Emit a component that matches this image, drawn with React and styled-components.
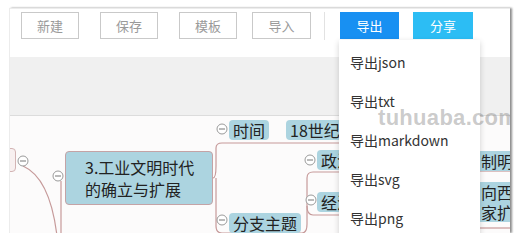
import React from 'react';
import styled, { createGlobalStyle } from 'styled-components';

const Global = createGlobalStyle`
  html, body {
    margin: 0;
    padding: 0;
    background: #ffffff;
    font-family: "Noto Sans CJK SC", "Noto Sans", sans-serif;
  }
`;

const Frame = styled.div`
  position: relative;
  margin: 8px 0 0 9px;
  width: 501px;
  height: 225px;
  display: flex;
  flex-direction: column;
  overflow: hidden;
  border-top: 1px solid #ececec;
  border-left: 1px solid #ececec;
  box-shadow: 2px 0 2px rgba(0, 0, 0, 0.45);
  box-sizing: border-box;
`;

const Toolbar = styled.div`
  height: 48px;
  flex: none;
  background: #fff;
  display: flex;
  align-items: flex-start;
  padding: 3px 0 0 11px;
  box-sizing: border-box;
`;

const Button = styled.div`
  width: ${p => p.w || 58}px;
  height: 27px;
  margin-right: ${p => p.mr || 0}px;
  box-sizing: border-box;
  border: 1px solid ${p => (p.primary ? p.primary : '#c9c9c9')};
  background: ${p => (p.primary ? p.primary : '#fff')};
  color: ${p => (p.primary ? '#fff' : '#9a9a9a')};
  font-size: 13px;
  line-height: 25px;
  text-align: center;
`;

const Separator = styled.div`
  width: 1px;
  height: 28px;
  background: #e2e2e2;
  margin-right: 15px;
`;

const GrayBand = styled.div`
  height: 58px;
  flex: none;
  background: #f0f0f0;
  border-bottom: 1px solid #dcdcdc;
`;

const Canvas = styled.div`
  position: relative;
  flex: 1;
  background: #fcfbfb;
`;

const Lines = styled.svg`
  position: absolute;
  left: 0;
  top: 0;
  overflow: visible;
`;

const Node = styled.div`
  position: absolute;
  left: ${p => p.x}px;
  top: ${p => p.y}px;
  padding: ${p => (p.main ? '4px 10px 4px 19px' : '0 4px')};
  width: ${p => (p.w ? `${p.w}px` : 'auto')};
  box-sizing: border-box;
  background: ${p => (p.root ? '#f8f0f0' : '#acd4e0')};
  border: ${p => (p.main ? '1px solid #c4a3a6' : p.root ? '1px solid #d3b4b4' : 'none')};
  border-radius: 4px;
  color: #222;
  font-size: 16px;
  line-height: ${p => (p.main ? '22px' : '20px')};
  white-space: nowrap;
`;

const Menu = styled.div`
  position: absolute;
  left: 329px;
  top: 31px;
  width: 141px;
  height: 210px;
  background: #fff;
  box-shadow: 0 2px 6px rgba(0, 0, 0, 0.18);
  padding-top: 3px;
  box-sizing: border-box;
`;

const MenuItem = styled.div`
  height: 39px;
  line-height: 39px;
  padding-left: 11px;
  font-size: 14px;
  color: #333;
`;

const Watermark = styled.div`
  position: absolute;
  left: 368px;
  top: 96px;
  font-family: "Liberation Sans", Arial, sans-serif;
  font-weight: bold;
  font-size: 22px;
  letter-spacing: 0.3px;
  color: rgba(130, 130, 130, 0.42);
  pointer-events: none;
`;

const Toggle = ({ cx, cy }) => (
  <g>
    <circle cx={cx} cy={cy} r="5" fill="#fff" stroke="#9a9a9a" strokeWidth="1" />
    <line x1={cx - 3} y1={cy} x2={cx + 3} y2={cy} stroke="#777" strokeWidth="1" />
  </g>
);

const menu = ['导出json', '导出txt', '导出markdown', '导出svg', '导出png'];

export default function App() {
  return (
    <>
      <Global />
      <Frame>
        <Toolbar>
          <Button mr={21}>新建</Button>
          <Button mr={21}>保存</Button>
          <Button mr={15}>模板</Button>
          <Button w={59} mr={13}>导入</Button>
          <Separator />
          <Button w={59} mr={14} primary="#1890f2">导出</Button>
          <Button w={60} primary="#2cbdf4">分享</Button>
        </Toolbar>
        <GrayBand />
        <Canvas>
          <Lines width="500" height="120">
            <g fill="none" stroke="#c69a9a" strokeWidth="1.2">
              <path d="M13 50 Q40 62 47 120" />
              <path d="M51 65 L51 120" />
              <path d="M203 62 Q206 62 206 50 L206 32 Q206 27 212 27 L340 27" />
              <path d="M206 62 L206 110 Q206 117 212 117 L292 117" />
              <path d="M292 117 Q297 117 297 108 L297 62 Q297 56 303 56 L340 56" />
              <path d="M297 90 Q297 99 303 99 L340 99" />
              <path d="M470 55 L500 55" />
              <path d="M470 112 L500 112" />
            </g>
            <Toggle cx={13} cy={45} />
            <Toggle cx={48} cy={60} />
            <Toggle cx={212} cy={13} />
            <Toggle cx={212} cy={104} />
            <Toggle cx={300} cy={44} />
            <Toggle cx={301} cy={84} />
          </Lines>
          <Node root x={-20} y={32} w={26} style={{ height: 24 }} />
          <Node main x={55} y={35} w={148}>
            3.工业文明时代
            <br />
            的确立与扩展
          </Node>
          <Node x={219} y={4}>时间</Node>
          <Node x={276} y={4}>18世纪中期</Node>
          <Node x={307} y={34}>政治</Node>
          <Node x={307} y={76}>经济</Node>
          <Node x={219} y={97}>分支主题</Node>
          <Node x={467} y={35}>制明主义</Node>
          <Node x={467} y={66}>
            向西欧
            <br />
            家扩展
          </Node>
        </Canvas>
        <Menu>
          {menu.map(m => (
            <MenuItem key={m}>{m}</MenuItem>
          ))}
        </Menu>
        <Watermark>tuhuaba.com</Watermark>
      </Frame>
    </>
  );
}
